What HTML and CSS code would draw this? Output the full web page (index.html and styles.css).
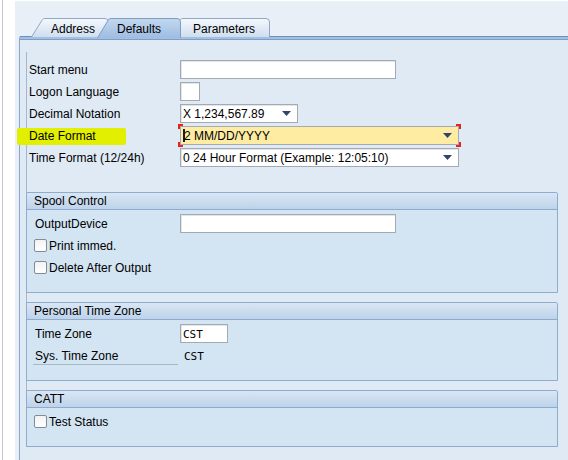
FILE: index.html
```html
<!DOCTYPE html>
<html>
<head>
<meta charset="utf-8">
<link rel="stylesheet" href="styles.css">
</head>
<body>
<svg class="defs" width="0" height="0" aria-hidden="true">
  <defs>
    <linearGradient id="tabOff" x1="0" y1="0" x2="0" y2="1">
      <stop offset="0" stop-color="#f5f8fc"/>
      <stop offset="1" stop-color="#cfdeef"/>
    </linearGradient>
    <linearGradient id="tabOn" x1="0" y1="0" x2="0" y2="1">
      <stop offset="0" stop-color="#c4d8ef"/>
      <stop offset="1" stop-color="#9dbde1"/>
    </linearGradient>
  </defs>
</svg>
<div class="screen">
  <div class="gutter"></div>
  <div class="panel">
    <div class="tabs">
      <div class="tab tab-address">
        <svg class="tab-shape" width="78" height="19" viewBox="0 0 78 19"><path d="M0.5 19 L11.5 1.5 Q12.3 0.5 14 0.5 L74 0.5 Q77.5 0.5 77.5 4 L77.5 19" fill="url(#tabOff)" stroke="#8fa8c8"/></svg>
        <span class="tab-label">Address</span>
      </div>
      <div class="tab tab-defaults">
        <svg class="tab-shape" width="84" height="20" viewBox="0 0 84 20"><path d="M0.5 20 L11.5 1.5 Q12.3 0.5 14 0.5 L80 0.5 Q83.5 0.5 83.5 4 L83.5 20" fill="url(#tabOn)" stroke="#7d9dc5"/></svg>
        <span class="tab-label">Defaults</span>
      </div>
      <div class="tab tab-params">
        <svg class="tab-shape" width="101" height="19" viewBox="0 0 101 19"><path d="M0.5 19 L11.5 1.5 Q12.3 0.5 14 0.5 L97 0.5 Q100.5 0.5 100.5 4 L100.5 19" fill="url(#tabOff)" stroke="#8fa8c8"/></svg>
        <span class="tab-label">Parameters</span>
      </div>
    </div>
    <div class="tabbody">
      <div class="tabline"></div>
      <div class="content">
        <div class="subscreen">
          <div class="frame">
            <div class="row">
              <span class="label">Start menu</span>
              <span class="input w-long"></span>
            </div>
            <div class="row">
              <span class="label">Logon Language</span>
              <span class="input w-tiny"></span>
            </div>
            <div class="row">
              <span class="label">Decimal Notation</span>
              <span class="input select w-mid"><span class="val">X 1,234,567.89</span><svg class="arrow" width="9" height="5" viewBox="0 0 9 5"><path d="M0 0 H9 L4.5 5 Z" fill="#2f4570"/></svg></span>
            </div>
            <div class="row">
              <span class="label"><span class="hl">Date Format</span></span>
              <span class="input select w-wide focus"><span class="val"><span class="caret"></span>2 MM/DD/YYYY</span><svg class="arrow" width="9" height="5" viewBox="0 0 9 5"><path d="M0 0 H9 L4.5 5 Z" fill="#2f4570"/></svg><span class="mark mark-tl"></span><span class="mark mark-bl"></span><span class="mark mark-tr"></span><span class="mark mark-br"></span></span>
            </div>
            <div class="row">
              <span class="label">Time Format (12/24h)</span>
              <span class="input select w-wide"><span class="val">0 24 Hour Format (Example: 12:05:10)</span><svg class="arrow" width="9" height="5" viewBox="0 0 9 5"><path d="M0 0 H9 L4.5 5 Z" fill="#2f4570"/></svg></span>
            </div>
          </div>

          <div class="group">
            <div class="group-title">Spool Control</div>
            <div class="group-body">
              <div class="row">
                <span class="label">OutputDevice</span>
                <span class="input w-long"></span>
              </div>
              <div class="row">
                <span class="check"><span class="box"></span>Print immed.</span>
              </div>
              <div class="row">
                <span class="check"><span class="box"></span>Delete After Output</span>
              </div>
            </div>
          </div>

          <div class="group">
            <div class="group-title">Personal Time Zone</div>
            <div class="group-body">
              <div class="row">
                <span class="label">Time Zone</span>
                <span class="input w-tz mono"><span class="val">CST</span></span>
              </div>
              <div class="row">
                <span class="label underline">Sys. Time Zone</span>
                <span class="out mono">CST</span>
              </div>
            </div>
          </div>

          <div class="group">
            <div class="group-title">CATT</div>
            <div class="group-body">
              <div class="row">
                <span class="check"><span class="box"></span>Test Status</span>
              </div>
            </div>
          </div>
        </div>
      </div>
    </div>
  </div>
</div>
</body>
</html>
```

FILE: styles.css
```css
* { box-sizing: border-box; }
html, body { margin: 0; padding: 0; }
body {
  background: #ffffff;
  font-family: "Liberation Sans", Arial, sans-serif;
  font-size: 12px;
  color: #000;
  width: 568px;
  height: 460px;
  overflow: hidden;
}
.defs { position: absolute; }

.screen {
  display: flex;
  height: 460px;
}
.gutter {
  width: 13px;
  margin-left: 2px;
  border-left: 1px solid #c4c4d6;
  background: #fff;
}
.panel {
  flex: 1;
  background: #e9eff6;
  margin-top: 1px;
  padding-top: 17px;
  padding-left: 4px;
  display: flex;
  flex-direction: column;
}

/* tabs */
.tabs {
  display: flex;
  height: 18px;
  padding-left: 12px;
  position: relative;
  z-index: 2;
}
.tab {
  position: relative;
  height: 18px;
  display: flex;
  align-items: center;
  padding-left: 20px;
  padding-top: 3px;
}
.tab-shape {
  position: absolute;
  left: 0;
  top: 0;
  z-index: -1;
}
.tab-label { position: relative; }
.tab-address { width: 78px; z-index: 2; }
.tab-defaults { width: 84px; margin-left: -12px; z-index: 3; }
.tab-params { width: 101px; margin-left: -12px; padding-left: 24px; z-index: 1; }

.tabbody {
  flex: 1;
  border-left: 1px solid #8aa8cc;
  background: #dfeaf5;
  border-top-left-radius: 2px;
}
.tabline {
  height: 4px;
  border-top: 1px solid #6b8fbb;
  border-bottom: 1px solid #7e9ec6;
  background: #a3c0e2;
}
.content {
  padding: 12px 10px 0 6px;
}
.subscreen {
  border-left: 1px solid #a2b8d2;
}

/* top form */
.frame {
  padding: 8px 0 0 2px;
  display: flex;
  flex-direction: column;
  gap: 3px;
  margin-bottom: 25px;
}
.row {
  display: flex;
  align-items: center;
  height: 19px;
}
.label {
  width: 151px;
  flex: none;
  white-space: nowrap;
  padding-top: 1px;
}
.group .label { width: 145px; }
.hl {
  background: #e2ef00;
  margin-left: -12px;
  padding: 1px 30px 2px 12px;
  border-radius: 2px;
}
.underline {
  align-self: stretch;
  display: flex;
  align-items: center;
  border-bottom: 1px solid #a7b7c8;
  margin-left: -2px;
  padding-left: 2px;
  width: 147px;
  margin-right: 3px;
}

.input {
  position: relative;
  height: 19px;
  background: #fff;
  border: 1px solid #a3aab3;
  box-shadow: inset 1px 1px 0 #e2e5e9;
  display: flex;
  align-items: center;
  padding-left: 2px;
  padding-top: 1px;
  white-space: nowrap;
}
.w-long { width: 216px; }
.w-tiny { width: 20px; }
.w-mid { width: 118px; }
.w-wide { width: 279px; }
.w-tz { width: 48px; }
.select { justify-content: space-between; padding-right: 6px; }
.arrow { flex: none; margin-top: -1px; }
.focus { background: #fdeca2; box-shadow: none; }
.caret {
  display: inline-block;
  width: 2px;
  height: 13px;
  background: #1a1a2a;
  vertical-align: -2px;
  margin-right: -1px;
}
.mark {
  position: absolute;
  width: 5px;
  height: 5px;
  border: 0 solid #e5231b;
}
.mark-tl { left: -3px; top: -3px; border-left-width: 2px; border-top-width: 2px; }
.mark-bl { left: -3px; bottom: -3px; border-left-width: 2px; border-bottom-width: 2px; }
.mark-tr { right: -3px; top: -3px; border-right-width: 2px; border-top-width: 2px; }
.mark-br { right: -3px; bottom: -3px; border-right-width: 2px; border-bottom-width: 2px; }

.mono {
  font-family: "DejaVu Sans Mono", "Liberation Mono", monospace;
  font-size: 11px;
}
.out { padding-left: 3px; padding-top: 1px; }

/* groups */
.group {
  border: 1px solid #8eacd0;
  border-top-right-radius: 2px;
  background: #d3e4f3;
  margin-bottom: 9px;
  margin-left: -1px;
}
.group:last-child { margin-bottom: 0; }
.group-title {
  height: 17px;
  border-bottom: 1px solid #8eacd0;
  background: linear-gradient(#d9e6f4, #bed3ea);
  padding-left: 7px;
  display: flex;
  align-items: center;
  line-height: 1;
}
.group-body {
  padding: 4px 0 15px 8px;
  display: flex;
  flex-direction: column;
  gap: 3px;
}
.check {
  display: flex;
  align-items: center;
  margin-left: -1px;
}
.box {
  width: 13px;
  height: 13px;
  border: 1px solid #858b92;
  border-radius: 2px;
  background: linear-gradient(#f1f3f5, #ffffff);
  margin-right: 2px;
}
```
